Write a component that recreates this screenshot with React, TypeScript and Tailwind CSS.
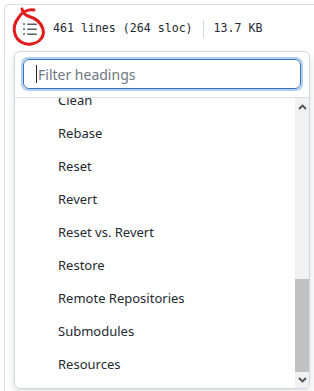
import React from "react";

const items = [
  "Clean",
  "Rebase",
  "Reset",
  "Revert",
  "Reset vs. Revert",
  "Restore",
  "Remote Repositories",
  "Submodules",
  "Resources",
];

export default function App() {
  return (
    <div className="relative w-[314px] h-[391px] bg-white overflow-hidden" style={{ fontFamily: '"Noto Sans", "Open Sans", sans-serif' }}>
      <div className="ml-[4px] mt-[4px] h-[400px] border-l border-t border-[#d8dee4] rounded-tl-[6px]">
        <div className="flex items-center h-[50px] pl-[17px] pb-[2px]">
          <div className="relative w-[16px] h-[16px] flex items-center justify-center text-[#57606a]">
            <svg width="16" height="16" viewBox="0 0 16 16" fill="currentColor">
              <path d="M5.75 2.5h8.5a.75.75 0 0 1 0 1.5h-8.5a.75.75 0 0 1 0-1.5Zm0 5h8.5a.75.75 0 0 1 0 1.5h-8.5a.75.75 0 0 1 0-1.5Zm0 5h8.5a.75.75 0 0 1 0 1.5h-8.5a.75.75 0 0 1 0-1.5ZM2 14a1 1 0 1 1 0-2 1 1 0 0 1 0 2Zm1-6a1 1 0 1 1-2 0 1 1 0 0 1 2 0ZM2 4a1 1 0 1 1 0-2 1 1 0 0 1 0 2Z" />
            </svg>
          </div>
          <div className="ml-[15px] flex items-center text-[11.6px] text-[#24292f]" style={{ fontFamily: '"DejaVu Sans Mono", "Liberation Mono", monospace' }}>
            <span>461 lines (264 sloc)</span>
            <span className="mx-[10px] w-px h-[18px] bg-[#d0d7de]" />
            <span>13.7 KB</span>
          </div>
        </div>
      </div>

      <svg className="absolute left-0 top-0" width="60" height="50" viewBox="0 0 60 50" fill="none">
        <path
          d="M34 10 C 28 9, 22 12, 19 17 C 15 22, 13 28, 15 34 C 17 41, 24 45, 31 44 C 39 43, 45 37, 43 29 C 41 22, 35 18, 28 16 C 25 15, 23 13, 22 9"
          stroke="#e01b1b"
          strokeWidth="3"
          strokeLinecap="round"
        />
      </svg>

      <div className="absolute left-[14px] top-[51px] w-[296px] h-[338px] bg-white border border-[#d0d7de] rounded-[6px] shadow-[0_4px_10px_rgba(0,0,0,0.12)] flex flex-col overflow-hidden">
        <div className="px-[6px] pt-[5px] pb-[6px] border-b border-[#d8dee4]">
          <div className="h-[34px] rounded-[7px] border-[2px] border-[#b3cff0] p-0">
            <div className="h-full rounded-[6px] border border-[#3a72b8] flex items-center pl-[12px] text-[14px] text-[#6e7781]">
              <span className="w-px h-[18px] bg-[#24292f] mr-[1px]" />
              Filter headings
            </div>
          </div>
        </div>
        <div className="flex flex-1 min-h-0">
          <div className="flex-1 overflow-hidden">
            <div className="mt-[-14px]">
              {items.map((t) => (
                <div key={t} className="h-[33px] flex items-center pl-[43px] text-[13px] text-[#24292f]">
                  {t}
                </div>
              ))}
            </div>
          </div>
          <div className="w-[14px] bg-[#f1f1f1] flex flex-col">
            <div className="h-[17px] flex items-center justify-center">
              <svg width="9" height="6" viewBox="0 0 9 6">
                <path d="M1 5 L4.5 1.5 L8 5" stroke="#505050" strokeWidth="1.8" fill="none" />
              </svg>
            </div>
            <div className="flex-1 flex flex-col justify-end">
              <div className="h-[93px] bg-[#c1c1c1]" />
            </div>
            <div className="h-[16px] flex items-center justify-center">
              <svg width="9" height="6" viewBox="0 0 9 6">
                <path d="M1 1 L4.5 4.5 L8 1" stroke="#505050" strokeWidth="1.8" fill="none" />
              </svg>
            </div>
          </div>
        </div>
      </div>
    </div>
  );
}
